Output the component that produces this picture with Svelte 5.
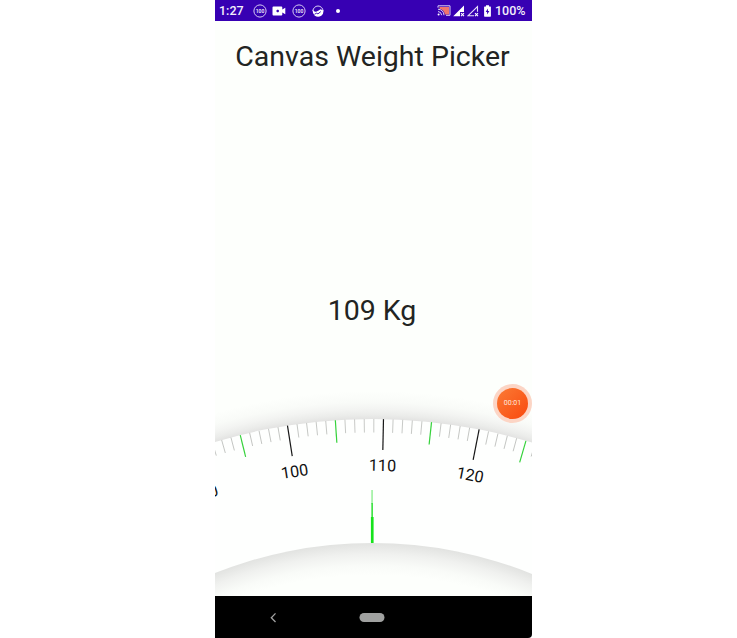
<script>
  const cx = 157.3;
  const cy = 571;
  const outer = 552;
  const inner = 428;
  const value = 108.84;
  const ticks = Array.from({ length: 38 }, (_, i) => {
    const kg = 90 + i;
    const kind = kg % 10 === 0 ? 'ten' : kg % 5 === 0 ? 'five' : 'one';
    return { kg, kind, length: { ten: 31, five: 22.5, one: 13.5 }[kind], angle: kg - value };
  });
</script>

{#snippet hundred()}
  <svg class="hundred" width="14" height="14" viewBox="0 0 14 14">
    <circle cx="7" cy="7" r="6.1" fill="none" stroke="#d5caf2" stroke-width="1" />
    <text x="7" y="9" text-anchor="middle">100</text>
  </svg>
{/snippet}

<main>
  <div class="phone">
    <header>
      <span class="time">1:27</span>
      {@render hundred()}
      <svg class="video" width="14" height="10" viewBox="0 0 14 10">
        <path fill="#fff" d="M1.5 .5h7.8q1 0 1 1v2l3-1.800v6.600l-3-1.800v2q0 1-1 1H1.5q-1 0-1-1v-7q0-1 1-1z" />
        <path stroke="#3700b3" stroke-width="1.3" d="M4.4 5h2.6M5.700 3.700v2.600" />
      </svg>
      {@render hundred()}
      <svg class="globe" width="12" height="12" viewBox="0 0 12 12">
        <path d="M1 6A5 5 0 0 1 11 6" fill="none" stroke="#d9cff5" stroke-width="1" />
        <path fill="#fff" d="M.5 4.500Q2.500 7.600 4.600 6.600T8.500 4.300l3 1.200q.2 3.500-2.200 5.300-3.300 2-6.500 0Q.4 8.700.5 4.500z" />
        <path stroke="#3700b3" stroke-width=".9" fill="none" d="M2.500 9.300l2.300-1.300 1 1 3-2.400" />
      </svg>
      <i class="dot"></i>
      <span class="space"></span>
      <svg class="cast" width="14" height="11" viewBox="0 0 14 11">
        <path fill="#ef746d" d="M2.500 2h9.500v7.400H8Q7.200 5 2.500 3.700z" />
        <path fill="none" stroke="#dcd0f4" stroke-width="1" d="M1 2.700V.8h12v9.500H9M1 4.200q5.500.4 6 6M1 6.500q3.300.3 3.700 3.700" />
        <circle cx="1.6" cy="9.500" r="1" fill="#fff" />
      </svg>
      <svg class="signal" width="12" height="12" viewBox="0 0 12 12">
        <path fill="#fff" d="M.2 11.200L11 .4v6.600H7v4.200z" />
        <path stroke="#fff" stroke-width="1.100" d="M8 8.200l3 3M11 8.200l-3 3" />
      </svg>
      <svg class="signal" width="12" height="12" viewBox="0 0 12 12">
        <path fill="none" stroke="#e6ddf8" stroke-width="1.100" d="M10.500 6.800V1.500L1.200 10.700H7" />
        <path stroke="#fff" stroke-width="1.100" d="M8 8.200l3 3M11 8.200l-3 3" />
      </svg>
      <svg class="battery" width="7" height="12" viewBox="0 0 7 12">
        <path fill="#fff" d="M2 .3h3v1.200h1.300q.6 0 .6.600v9q0 .6-.6.600H.7q-.6 0-.6-.6v-9q0-.6.600-.6H2z" />
        <path fill="#3700b3" d="M3.900 3.500L1.700 7h1.400v2.500L5.400 6H3.900z" />
      </svg>
      <span class="percent">100%</span>
    </header>

    <section class="content">
      <h1>Canvas Weight Picker</h1>
      <p>109 Kg</p>
      <svg class="scale" width="317" height="216" viewBox="0 -20 317 216">
        <defs>
          <radialGradient id="outside" gradientUnits="userSpaceOnUse" {cx} {cy} r="580">
            <stop offset=".951" stop-color="#e2e2e1" />
            <stop offset=".959" stop-color="#ebecea" />
            <stop offset=".969" stop-color="#f3f4f2" />
            <stop offset=".981" stop-color="#f9fbf8" />
            <stop offset="1" stop-color="#fdfffc" />
          </radialGradient>
          <radialGradient id="inside" gradientUnits="userSpaceOnUse" {cx} {cy} r="428">
            <stop offset=".925" stop-color="#fdfffc" />
            <stop offset=".948" stop-color="#f9fbf8" />
            <stop offset=".974" stop-color="#f0f1ef" />
            <stop offset="1" stop-color="#e2e3e1" />
          </radialGradient>
        </defs>
        <circle {cx} {cy} r="580" fill="url(#outside)" />
        <circle {cx} {cy} r={outer} fill="#fefffe" />
        <circle {cx} {cy} r={inner} fill="url(#inside)" />
        {#each ticks as tick (tick.kg)}
          <g transform="rotate({tick.angle} {cx} {cy})">
            <line class={tick.kind} x1={cx} x2={cx} y1={cy - outer} y2={cy - outer + tick.length} />
            {#if tick.kind === 'ten'}
              <text x={cx} y={cy - 500} text-anchor="middle">{tick.kg}</text>
            {/if}
          </g>
        {/each}
        <path fill="#6fe973" d="M156.500 90h1.100v14h-1.100z" />
        <path fill="#42e348" d="M156.300 103h1.700v14h-1.700z" />
        <path fill="#16e31c" d="M155.900 117h2.700v26h-2.700z" />
      </svg>
      <div class="recorder"><span>00:01</span></div>
    </section>

    <nav>
      <svg width="317" height="42" viewBox="0 0 317 42">
        <path d="M60.500 17.400L56.300 21.700l4.200 4.300" fill="none" stroke="#a2a2a2" stroke-width="1.300" />
        <rect x="144.500" y="17" width="25" height="9" rx="4.500" fill="#a0a1a0" />
      </svg>
    </nav>
  </div>
</main>

<style>
  :global(body) {
    margin: 0;
    background: #fff;
    overflow: hidden;
  }
  main {
    height: 638px;
    padding-left: 215px;
    font-family: Roboto, sans-serif;
  }
  .phone {
    width: 317px;
    height: 638px;
    display: flex;
    flex-direction: column;
    background: #fdfffc;
    overflow: hidden;
    border-bottom-right-radius: 4px;
  }
  header {
    height: 21px;
    flex: none;
    box-sizing: border-box;
    padding: 0 7px 0 4px;
    display: flex;
    align-items: center;
    background: #3700b3;
    color: #f3effb;
    font-size: 12.500px;
    font-weight: 500;
    line-height: 21px;
  }
  header svg {
    flex: none;
  }
  .time {
    width: 33.500px;
  }
  .hundred text {
    font-size: 5px;
    font-weight: 500;
    fill: #fff;
  }
  .video {
    margin: 0 6px 0 5.500px;
  }
  .globe {
    margin-left: 6px;
  }
  .dot {
    width: 4px;
    height: 4px;
    margin-left: 12px;
    border-radius: 50%;
    background: #fff;
  }
  .space {
    flex: 1;
  }
  .signal {
    margin-left: 2px;
  }
  .battery {
    margin: 0 4px 0 5px;
  }
  .percent {
    width: 30px;
    white-space: nowrap;
  }
  .content {
    position: relative;
    height: 575px;
    display: flex;
    flex-direction: column;
  }
  h1,
  p {
    margin: 0;
    color: #222422;
    font-weight: 400;
    font-size: 28.500px;
    line-height: 36px;
    text-align: center;
    white-space: nowrap;
  }
  h1 {
    padding: 18px 2px 0 0;
  }
  p {
    padding: 218px 3px 0 0;
  }
  .scale {
    display: block;
    margin-top: auto;
    flex: none;
  }
  .scale text {
    font-size: 16.200px;
    fill: #111;
  }
  .one {
    stroke: #c2c4c1;
    stroke-width: 0.9;
  }
  .five {
    stroke: #35d23b;
    stroke-width: 1.200;
  }
  .ten {
    stroke: #171717;
    stroke-width: 1.200;
  }
  .recorder {
    position: absolute;
    left: 278px;
    top: 362.500px;
    width: 39px;
    height: 39px;
    border-radius: 50%;
    background: #fcd5c5;
    display: grid;
    place-items: center;
  }
  .recorder span {
    width: 31px;
    height: 31px;
    border-radius: 50%;
    background: linear-gradient(135deg, #fb7b35, #f9480d);
    color: #ffe9dd;
    font-size: 7px;
    line-height: 31px;
    text-align: center;
  }
  nav {
    height: 42px;
    flex: none;
    box-sizing: border-box;
    background: #000;
  }
  nav svg {
    display: block;
  }
</style>
